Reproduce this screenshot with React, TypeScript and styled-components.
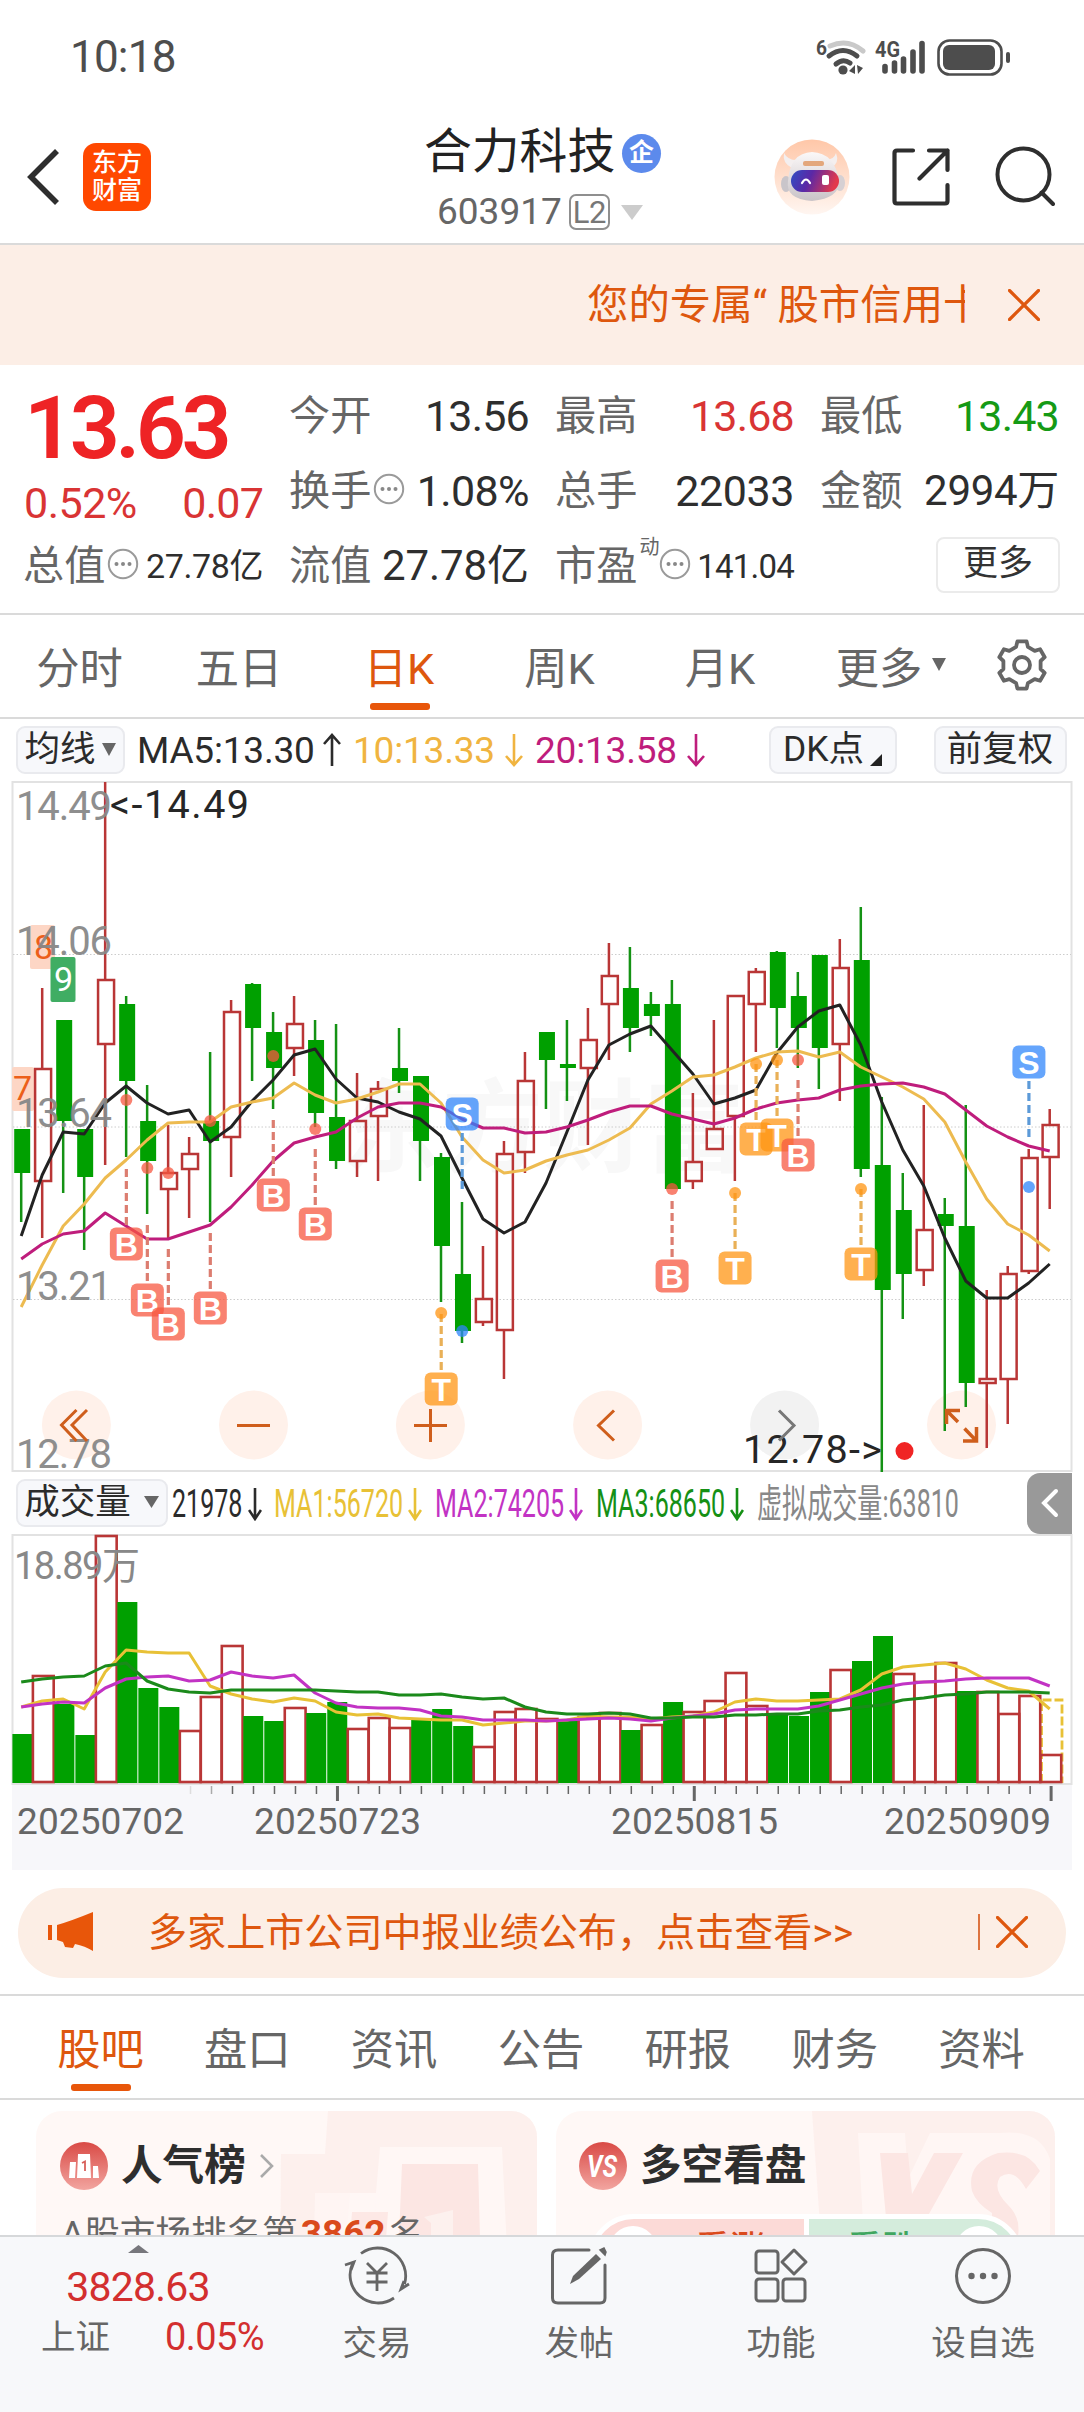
import React from "react";
import styled, { createGlobalStyle } from "styled-components";

const SANS = `Roboto, "Noto Sans CJK SC", sans-serif`;
const ORANGE = "#de570e";
const RED = "#b93636";
const GREEN = "#00a000";

const GlobalStyle = createGlobalStyle`
  html, body { margin: 0; padding: 0; background: #fff; }
  body { font-family: ${SANS}; color: #2b2b2b; }
  * { box-sizing: border-box; }
  svg { display: block; flex: none; }
`;

const Screen = styled.main`
  width: 1084px;
  height: 2412px;
  overflow: hidden;
  display: flex;
  flex-direction: column;
  background: #fff;
`;

const Txt = styled.span<{ $size: number; $color?: string; $ls?: number; $weight?: number }>`
  font-size: ${(p) => p.$size}px;
  color: ${(p) => p.$color || "#2e2e2e"};
  letter-spacing: ${(p) => p.$ls || 0}px;
  font-weight: ${(p) => p.$weight || 400};
  line-height: 1.2;
  white-space: nowrap;
`;

/* ---------- status bar and header ---------- */

const StatusBar = styled.div`
  flex: none;
  height: 110px;
  padding: 5px 73px 0 70px;
  display: flex;
  justify-content: space-between;
  align-items: center;
`;

const Header = styled.header`
  flex: none;
  height: 135px;
  display: grid;
  grid-template-columns: 424px 237px 1fr;
  border-bottom: 2px solid #dadada;
`;

const HeaderLeft = styled.div`
  display: flex;
  align-items: center;
  padding: 1px 0 0 26px;
  gap: 23px;
`;

const Logo = styled.div`
  width: 68px;
  height: 68px;
  border-radius: 13px;
  background: #ff4800;
  color: #fff;
  font: 500 25px/28px ${SANS};
  display: flex;
  flex-direction: column;
  align-items: center;
  justify-content: center;
`;

const HeaderTitle = styled.div`
  padding-top: 13px;
`;

const TitleRow = styled.div`
  height: 60px;
  display: flex;
  align-items: center;
  gap: 7px;
`;

const CorpBadge = styled.span`
  width: 39px;
  height: 39px;
  border-radius: 50%;
  background: #5c8aec;
  color: #fff;
  font-size: 25px;
  font-weight: 700;
  line-height: 38px;
  text-align: center;
`;

const CodeRow = styled.div`
  height: 58px;
  padding-left: 13px;
  display: flex;
  align-items: center;
`;

const LevelBox = styled.span`
  width: 41px;
  height: 36px;
  margin: 0 11px 0 7px;
  border: 2px solid #8f8f8f;
  border-radius: 7px;
  color: #777;
  font-size: 31px;
  letter-spacing: -0.5px;
  line-height: 33px;
  text-align: center;
`;

const HeaderRight = styled.div`
  display: flex;
  align-items: center;
  padding: 1px 0 0 113px;
`;

const Banner = styled.div`
  flex: none;
  height: 120px;
  padding: 0 44px 0 587px;
  background: #fceee6;
  display: flex;
  align-items: center;
  justify-content: space-between;
`;

const Marquee = styled.div`
  width: 378px;
  overflow: hidden;
  white-space: nowrap;
  font-size: 41.4px;
  line-height: 60px;
  color: ${ORANGE};
`;

/* ---------- quote ---------- */

const Quote = styled.section`
  flex: none;
  height: 250px;
  padding: 14px 25px 0 24px;
  display: grid;
  grid-template-columns: 239px 239px 238px 238px;
  grid-template-rows: 75px 75px 75px;
  column-gap: 27px;
  border-bottom: 2px solid #dadada;
`;

const PriceCell = styled.div`
  grid-row: span 2;
  display: grid;
  grid-template-rows: 98px 54px;
`;

const Price = styled.div`
  font-size: 88px;
  line-height: 97px;
  font-weight: 600;
  color: #ee2325;
  letter-spacing: -4.600px;
`;

const Between = styled.div`
  display: flex;
  align-items: center;
  justify-content: space-between;
`;

const LabelBox = styled.span`
  display: flex;
  align-items: center;
  gap: 2px;
`;

const Label = styled.span`
  margin-left: -1px;
  font-size: 41.2px;
  line-height: 1.2;
  color: #666;
  white-space: nowrap;
`;

const Sup = styled.sup`
  align-self: flex-start;
  font-size: 20px;
  line-height: 20px;
  color: #666;
  margin: -5px -2px 0 0;
`;

const MoreBtn = styled.button`
  width: 124px;
  height: 56px;
  margin: 0 -1px 4px auto;
  padding: 0 0 2px;
  border: 2px solid #ebebeb;
  border-radius: 8px;
  background: #fff;
  color: #333;
  font: 400 35px/48px ${SANS};
`;

/* ---------- tabs ---------- */

const PeriodTabs = styled.nav`
  flex: none;
  height: 104px;
  display: grid;
  grid-template-columns: 159px 160px 160px 161px 160px 182px 80px;
  border-bottom: 2px solid #dadada;
`;

const Tab = styled.div<{ $on?: boolean }>`
  position: relative;
  display: flex;
  align-items: center;
  justify-content: center;
  gap: 10px;
  padding-bottom: 3px;
  font-size: 43.3px;
  color: ${(p) => (p.$on ? ORANGE : "#666")};
  &::after {
    content: "";
    display: ${(p) => (p.$on ? "block" : "none")};
    position: absolute;
    left: calc(50% - 29px);
    bottom: 7px;
    width: 60px;
    height: 7px;
    border-radius: 3px;
    background: #e8560a;
  }
`;

/* ---------- indicator bars ---------- */

const IndicatorBar = styled.div`
  flex: none;
  height: 62px;
  padding: 0 17px 0 16px;
  display: flex;
  align-items: center;
`;

const Chip = styled.button<{ $w: number; $ml?: string; $gap?: number }>`
  width: ${(p) => p.$w}px;
  height: 48px;
  flex: none;
  margin-left: ${(p) => p.$ml || "0"};
  padding: 0 1px 2px 0;
  display: flex;
  align-items: center;
  justify-content: center;
  gap: ${(p) => p.$gap || 6}px;
  border: 2px solid #e9eaee;
  border-radius: 9px;
  background: #f7f8fb;
  color: #2b2b2b;
  font: 400 35.5px/44px ${SANS};
  white-space: nowrap;
`;

const Ma = styled.span<{ $w: number; $color: string }>`
  width: ${(p) => p.$w}px;
  flex: none;
  display: flex;
  align-items: center;
  justify-content: space-between;
  color: ${(p) => p.$color};
  font-size: 37px;
  letter-spacing: -0.2px;
  white-space: nowrap;
`;

const VolumeBar = styled.div`
  flex: none;
  height: 62px;
  padding-left: 16px;
  margin-right: 12px;
  display: flex;
  align-items: center;
`;

const VolMa = styled.span<{ $w: number; $color: string }>`
  width: ${(p) => p.$w}px;
  flex: none;
  display: flex;
  align-items: center;
  justify-content: space-between;
  padding-top: 2px;
  color: ${(p) => p.$color};
`;

const Narrow = styled.span<{ $w: number }>`
  width: ${(p) => p.$w}px;
  white-space: nowrap;
  font-size: 39px;
  line-height: 46px;
  > span {
    display: inline-block;
    transform: scaleX(0.643);
    transform-origin: left center;
  }
`;

const SideHandle = styled.button`
  margin-left: auto;
  width: 45px;
  height: 61px;
  padding: 0;
  border: 0;
  border-radius: 13px 0 0 13px;
  background: #999;
  display: flex;
  align-items: center;
  justify-content: center;
`;

/* ---------- notice and lower tabs ---------- */

const Notice = styled.div`
  flex: none;
  height: 90px;
  margin: 18px 18px 16px;
  padding: 0 38px 3px 29px;
  border-radius: 45px;
  background: #fceee5;
  display: flex;
  align-items: center;
`;

const NoticeText = styled.span`
  margin-left: 53px;
  flex: 1;
  padding-bottom: 5px;
  color: ${ORANGE};
  font-size: 39.1px;
  white-space: nowrap;
`;

const Divider = styled.i`
  width: 2px;
  height: 36px;
  margin-right: 16px;
  background: #dd7440;
`;

const InfoTabs = styled.nav`
  flex: none;
  height: 106px;
  padding: 0 29px 0 27px;
  display: grid;
  grid-template-columns: repeat(7, 1fr);
  border-top: 2px solid #dadada;
  border-bottom: 2px solid #dadada;
`;

const Cards = styled.section`
  flex: none;
  height: 135px;
  padding: 11px 29px 0 36px;
  display: grid;
  grid-template-columns: 501px 499px;
  gap: 19px;
  overflow: hidden;
`;

const Card = styled.article`
  position: relative;
  height: 200px;
  padding: 24px 24px 0;
  border-radius: 26px;
  background: #fff8f6;
  overflow: hidden;
`;

const CardArt = styled.svg`
  position: absolute;
  inset: 0;
`;

const CardHead = styled.div`
  position: relative;
  display: flex;
  align-items: center;
  height: 62px;
  gap: 13px;
`;

const CardTitle = styled.h3`
  margin: 0;
  font-size: 41.6px;
  line-height: 58px;
  font-weight: 700;
  color: #2e2e2e;
`;

const RankLine = styled.p`
  position: relative;
  margin: 9px 0 0 1px;
  font-size: 35.6px;
  line-height: 56px;
  color: #666;
  white-space: nowrap;
  b { color: #da4a1c; font-size: 37px; margin: 0 3px; }
`;

const VotePill = styled.div`
  position: relative;
  height: 92px;
  margin: 17px 0 0 8px;
  width: 436px;
  border: 5px solid #fff;
  border-radius: 46px;
  background: #fff;
  display: grid;
  grid-template-columns: 1fr 1fr;
  gap: 5px;
  overflow: hidden;
`;

const VoteSide = styled.div<{ $up?: boolean }>`
  display: flex;
  flex-direction: ${(p) => (p.$up ? "row" : "row-reverse")};
  align-items: flex-start;
  padding: 7px 16px;
  gap: 38px;
  background: ${(p) => (p.$up ? "#fcdad7" : "#d4ecdc")};
  color: ${(p) => (p.$up ? "#da4a1c" : "#3fa65f")};
  font-size: 35px;
  font-weight: 500;
  line-height: 48px;
  &::before {
    content: "";
    width: 48px;
    height: 48px;
    border-radius: 50%;
    background: #fff;
  }
`;

/* ---------- bottom navigation ---------- */

const BottomNav = styled.nav`
  flex: 1;
  background: #f7f8fa;
  border-top: 2px solid #d6d8da;
  display: grid;
  grid-template-columns: 276px 202px 202px 202px 202px;
`;

const IndexCell = styled.div`
  display: flex;
  flex-direction: column;
  align-items: center;
  padding-top: 8px;
`;

const IndexRow = styled.div`
  width: 223px;
  display: flex;
  align-items: center;
  justify-content: space-between;
  margin: 3px 0 0 29px;
`;

const NavCell = styled.div`
  display: flex;
  flex-direction: column;
  align-items: center;
  padding-top: 8px;
  gap: 14px;
  font-size: 34.5px;
  line-height: 44px;
  color: #666;
`;

/* ---------- small icons ---------- */

const Down = ({ w, h, c = "#666" }: { w: number; h: number; c?: string }) => (
  <svg width={w} height={h} viewBox="0 0 10 10" preserveAspectRatio="none">
    <path d="M0 0H10L5 10Z" fill={c} />
  </svg>
);

const Arrow = ({ w = 18, up }: { w?: number; up?: boolean }) => (
  <svg width={w} height="34" viewBox={`0 0 ${w} 34`} fill="none" stroke="currentColor" strokeWidth="2.6">
    <path d={up ? `M${w / 2} 33V2M1 11L${w / 2} 2L${w - 1} 11` : `M${w / 2} 1V32M1 23L${w / 2} 32L${w - 1} 23`} />
  </svg>
);

const Cross = () => (
  <svg width="32" height="32" viewBox="0 0 32 32" stroke={ORANGE} strokeWidth="3.200" strokeLinecap="round">
    <path d="M1.5 1.5L30.5 30.5M30.5 1.5L1.5 30.5" />
  </svg>
);

const DotsSvg = styled.svg`
  margin-bottom: 6px;
`;

const Dots = () => (
  <DotsSvg width="32" height="32" viewBox="0 0 32 32" fill="none">
    <circle cx="16" cy="16" r="14.2" stroke="#9a9a9a" strokeWidth="2" />
    <g fill="#888">
      <circle cx="9.5" cy="16" r="2" />
      <circle cx="16" cy="16" r="2" />
      <circle cx="22.5" cy="16" r="2" />
    </g>
  </DotsSvg>
);

const StatusIcons = () => (
  <svg width="196" height="44" viewBox="815 34 196 44" fill="none">
    <text x="816" y="53" fontSize="21" fontWeight="700" fill="#4d4d4d" textLength="11" lengthAdjust="spacingAndGlyphs">6</text>
    <g strokeLinecap="round" strokeWidth="5">
      <path d="M830 44Q848 36 863 49" stroke="#c9c9c9" />
      <path d="M829 54Q843 43 857 54" stroke="#4d4d4d" />
      <path d="M836 62Q843 56 850 61" stroke="#4d4d4d" />
    </g>
    <circle cx="843" cy="68" r="4.6" fill="#4d4d4d" />
    <path d="M855 63V72L849 69ZM857 63L863 66L858 72Z" fill="#4d4d4d" />
    <text x="875" y="55" fontSize="22" fontWeight="700" fill="#4d4d4d" textLength="25" lengthAdjust="spacingAndGlyphs">4G</text>
    <g stroke="#4d4d4d" strokeWidth="5.6" strokeLinecap="round">
      <path d="M885 64.500V69M894.500 61V69M903.500 57V69M913 50V69M922 41.500V69" />
    </g>
    <rect x="938.500" y="38.500" width="63" height="34" rx="11" stroke="#4d4d4d" strokeWidth="2.600" />
    <rect x="943" y="43" width="52" height="25" rx="6" fill="#4d4d4d" />
    <rect x="1006" y="50" width="4" height="11" rx="2" fill="#4d4d4d" />
  </svg>
);

const Robot = () => (
  <svg width="76" height="76" viewBox="0 0 76 76">
    <defs>
      <linearGradient id="halo" x1="0" y1="0" x2="0" y2="1">
        <stop offset="0" stopColor="#ffc7a8" />
        <stop offset="1" stopColor="#fff6f1" />
      </linearGradient>
      <linearGradient id="visor" x1="0" y1="0" x2="1" y2="0.200">
        <stop offset="0" stopColor="#2f4fc4" />
        <stop offset="0.450" stopColor="#5b28a6" />
        <stop offset="1" stopColor="#e2384c" />
      </linearGradient>
      <linearGradient id="shell" x1="0" y1="0" x2="0" y2="1">
        <stop offset="0" stopColor="#fbf8f8" />
        <stop offset="1" stopColor="#c9c3c7" />
      </linearGradient>
    </defs>
    <circle cx="38" cy="38" r="37.500" fill="url(#halo)" />
    <path d="M10 14Q8 24 18 29L25 21Q14 22 10 14ZM62 14Q66 24 57 29L51 21Q60 21 62 14Z" fill="#f4efef" />
    <ellipse cx="12" cy="45" rx="5" ry="8" fill="#c9c5ca" />
    <ellipse cx="66" cy="44" rx="5" ry="8" fill="#d6d0d3" />
    <path d="M14 42Q16 14 38 13Q61 14 65 42Q66 59 38 62Q11 60 14 42Z" fill="url(#shell)" />
    <rect x="29" y="22" width="21" height="5" rx="2" fill="#e3a77c" />
    <rect x="17" y="31" width="48" height="22" rx="11" fill="url(#visor)" />
    <path d="M28 44Q32 37 36 44" fill="none" stroke="#fff" strokeWidth="2.200" strokeLinecap="round" />
    <rect x="48" y="36" width="7" height="10" rx="2" fill="#fff" />
  </svg>
);

const gearPath = Array.from({ length: 6 })
  .map((_, k) => {
    const at = (deg: number, r: number) => {
      const a = ((deg + k * 60 - 90) * Math.PI) / 180;
      return `${(27 + r * Math.cos(a)).toFixed(1)} ${(27 + r * Math.sin(a)).toFixed(1)}`;
    };
    return `${at(-18, 19)} L${at(-11, 24)} L${at(11, 24)} L${at(18, 19)}`;
  })
  .join(" L");

const Gear = () => (
  <svg width="54" height="54" viewBox="0 0 54 54" fill="none" stroke="#666" strokeWidth="3.800" strokeLinejoin="round">
    <path d={`M${gearPath}Z`} />
    <circle cx="27" cy="27" r="8" />
  </svg>
);

/* ---------- chart data: [kind, high, top, bottom, low] ---------- */

type Candle = ["r" | "g", number, number, number, number];
const CANDLES: Candle[] = [
  ["g", 1129, 1129, 1173, 1222], ["r", 988, 1068, 1182, 1238], ["g", 1020, 1020, 1121, 1193],
  ["g", 1129, 1129, 1177, 1250], ["r", 782, 979, 1045, 1165], ["g", 996, 1004, 1081, 1157],
  ["g", 1085, 1121, 1161, 1214], ["r", 1125, 1172, 1190, 1238], ["r", 1137, 1153, 1170, 1218],
  ["g", 1052, 1121, 1141, 1222], ["r", 1000, 1011, 1138, 1177], ["g", 983, 984, 1028, 1081],
  ["g", 1012, 1032, 1068, 1109], ["r", 996, 1023, 1049, 1076], ["g", 1020, 1040, 1113, 1127],
  ["g", 1024, 1117, 1161, 1169], ["r", 1073, 1120, 1162, 1177], ["r", 1081, 1088, 1117, 1181],
  ["g", 1028, 1068, 1081, 1093], ["g", 1076, 1076, 1141, 1181], ["g", 1153, 1157, 1246, 1302],
  ["g", 1202, 1274, 1331, 1343], ["r", 1246, 1298, 1323, 1326], ["r", 1141, 1153, 1331, 1379],
  ["r", 1052, 1080, 1153, 1173], ["g", 1032, 1032, 1060, 1109], ["g", 1020, 1064, 1068, 1101],
  ["r", 1008, 1039, 1069, 1145], ["r", 943, 975, 1005, 1060], ["g", 947, 988, 1028, 1052],
  ["g", 992, 1004, 1016, 1036], ["g", 980, 1004, 1189, 1189], ["r", 1093, 1161, 1182, 1189],
  ["r", 1020, 1128, 1150, 1150], ["r", 995, 995, 1117, 1181], ["r", 968, 971, 1005, 1052],
  ["g", 951, 952, 1008, 1048], ["g", 972, 996, 1028, 1068], ["g", 955, 955, 1048, 1089],
  ["r", 939, 967, 1045, 1101], ["g", 907, 960, 1169, 1177], ["g", 1097, 1165, 1290, 1472],
  ["g", 1173, 1210, 1274, 1319], ["r", 1105, 1229, 1271, 1286], ["g", 1198, 1214, 1226, 1431],
  ["g", 1105, 1226, 1383, 1407], ["r", 1290, 1378, 1384, 1448], ["r", 1266, 1273, 1380, 1424],
  ["r", 1149, 1157, 1272, 1274], ["r", 1109, 1124, 1158, 1209],
];

const MA5 = [1236, 1175, 1132, 1134, 1103, 1086, 1103, 1114, 1110, 1142, 1127, 1101, 1080, 1055, 1049, 1079, 1098, 1102, 1112, 1119, 1136, 1178, 1219, 1233, 1222, 1183, 1132, 1080, 1045, 1034, 1026, 1050, 1074, 1104, 1098, 1090, 1053, 1027, 1011, 1005, 1045, 1102, 1150, 1186, 1238, 1281, 1298, 1298, 1283, 1264];
const MA10 = [1307, 1265, 1226, 1204, 1178, 1160, 1140, 1123, 1122, 1122, 1107, 1102, 1098, 1083, 1095, 1103, 1099, 1092, 1084, 1084, 1103, 1137, 1160, 1173, 1170, 1161, 1155, 1150, 1140, 1128, 1104, 1091, 1077, 1075, 1067, 1058, 1052, 1051, 1057, 1052, 1067, 1077, 1087, 1099, 1122, 1162, 1199, 1224, 1235, 1251];
const MA20 = [1259, 1244, 1234, 1231, 1213, 1226, 1239, 1239, 1232, 1225, 1207, 1185, 1161, 1143, 1137, 1132, 1118, 1107, 1103, 1103, 1107, 1119, 1128, 1128, 1133, 1132, 1127, 1120, 1112, 1106, 1106, 1114, 1119, 1124, 1118, 1109, 1103, 1100, 1098, 1090, 1086, 1084, 1083, 1087, 1094, 1110, 1126, 1137, 1146, 1151];

type Signal = { i: number; t: "B" | "T" | "S"; dot: number; from: number; y: number };
const SIGNALS: Signal[] = [
  { i: 5, t: "B", dot: 1100, from: 1169, y: 1244 },
  { i: 6, t: "B", dot: 1168, from: 1225, y: 1300 },
  { i: 7, t: "B", dot: 1173, from: 1249, y: 1324 },
  { i: 9, t: "B", dot: 1121, from: 1233, y: 1308 },
  { i: 12, t: "B", dot: 1056, from: 1120, y: 1195 },
  { i: 14, t: "B", dot: 1129, from: 1149, y: 1224 },
  { i: 20, t: "T", dot: 1313, from: 1314, y: 1389 },
  { i: 21, t: "S", dot: 1331, from: 1133, y: 1114 },
  { i: 31, t: "B", dot: 1189, from: 1201, y: 1276 },
  { i: 34, t: "T", dot: 1193, from: 1193, y: 1268 },
  { i: 35, t: "T", dot: 1064, from: 1064, y: 1139 },
  { i: 36, t: "T", dot: 1060, from: 1060, y: 1135 },
  { i: 37, t: "B", dot: 1060, from: 1080, y: 1155 },
  { i: 40, t: "T", dot: 1189, from: 1189, y: 1264 },
  { i: 48, t: "S", dot: 1187, from: 1081, y: 1062 },
];
const SIGNAL_COLOR = { B: "#f75740", T: "#ff9412", S: "#2f85fb" };
const DASH_COLOR = { B: "#dc7d70", T: "#e9b057", S: "#5c9ad8" };

const VOLUMES: ["r" | "g", number][] = [
  ["g", 1734], ["r", 1675], ["g", 1704], ["g", 1735], ["r", 1535], ["g", 1602], ["g", 1688], ["g", 1707], ["r", 1730], ["r", 1696],
  ["r", 1645], ["g", 1716], ["g", 1721], ["r", 1707], ["g", 1713], ["g", 1702], ["r", 1728], ["r", 1717], ["r", 1727], ["g", 1720],
  ["g", 1709], ["g", 1726], ["r", 1746], ["r", 1711], ["r", 1708], ["r", 1718], ["g", 1720], ["r", 1716], ["r", 1712], ["g", 1730],
  ["r", 1724], ["g", 1702], ["r", 1711], ["r", 1700], ["r", 1672], ["r", 1705], ["g", 1715], ["g", 1716], ["g", 1692], ["r", 1669],
  ["g", 1661], ["g", 1636], ["r", 1673], ["r", 1681], ["r", 1662], ["g", 1691], ["r", 1691], ["r", 1713], ["r", 1695], ["r", 1754],
];
const V1 = [1707, 1701, 1699, 1709, 1672, 1650, 1652, 1653, 1653, 1686, 1694, 1699, 1702, 1698, 1701, 1712, 1715, 1714, 1718, 1719, 1720, 1720, 1725, 1723, 1721, 1721, 1720, 1716, 1717, 1717, 1719, 1717, 1716, 1712, 1702, 1699, 1701, 1701, 1700, 1699, 1690, 1674, 1667, 1665, 1663, 1669, 1680, 1688, 1691, 1709];
const V2 = [1707, 1704, 1702, 1703, 1688, 1679, 1677, 1676, 1681, 1680, 1672, 1676, 1678, 1675, 1693, 1703, 1707, 1708, 1708, 1710, 1716, 1717, 1720, 1720, 1720, 1721, 1720, 1719, 1718, 1719, 1721, 1718, 1716, 1714, 1710, 1709, 1709, 1709, 1706, 1700, 1694, 1688, 1684, 1682, 1681, 1679, 1678, 1678, 1678, 1686];
const V3 = [1682, 1679, 1677, 1676, 1666, 1663, 1681, 1689, 1692, 1693, 1690, 1690, 1690, 1690, 1690, 1691, 1692, 1692, 1695, 1695, 1694, 1697, 1699, 1698, 1707, 1712, 1714, 1714, 1713, 1714, 1718, 1718, 1717, 1717, 1715, 1715, 1714, 1714, 1711, 1710, 1707, 1705, 1700, 1698, 1695, 1694, 1692, 1692, 1692, 1693];

const STEP = 20.99;
const cx = (i: number) => 21.2 + STEP * i;
const line = (ys: number[]) => ys.map((y, i) => `${cx(i).toFixed(1)},${y}`).join(" ");

const ChartText = ({ x, y, w, size, fill = "#888", children }: { x: number; y: number; w: number; size: number; fill?: string; children: string }) => (
  <text x={x} y={y} textLength={w} fontSize={size} fill={fill} fontFamily={SANS}>{children}</text>
);

const ROUND = [76.4, 253.5, 430.4, 607.6, 784.6, 961.5];

const CandleChart = () => (
  <svg width="1084" height="691" viewBox="0 781 1084 691" fill="none">
    <text x="341" y="1164" fontSize="101" fontWeight="700" fill="#f8f8f8" fontFamily={SANS}>东方财富</text>
    <rect x="12.500" y="782" width="1059" height="689" stroke="#e2e2e2" strokeWidth="2" />
    {[954.5, 1127, 1299.5].map((y) => (
      <path key={y} d={`M13 ${y}H1071`} stroke="#ccc" strokeDasharray="1.500 2" />
    ))}
    {ROUND.map((x, k) => (
      <circle key={x} cx={x} cy="1425" r="34.500" fill={k === 4 ? "#f2f2f2" : "#fff1ea"} />
    ))}
    <rect x="30" y="925" width="25" height="44" rx="2" fill="#fdd6c5" />
    <rect x="12" y="1067" width="22" height="44" rx="2" fill="#fdd6c5" />
    <rect x="50.500" y="957" width="25" height="45" rx="2" fill="#40ad63" />
    {CANDLES.map(([k, h, t, b, l], i) => {
      const x = cx(i);
      return k === "g" ? (
        <g key={i}>
          <path d={`M${x} ${h}V${l}`} stroke="#149214" strokeWidth="2.500" />
          <rect x={x - 7} y={t} width="16" height={b - t} fill={GREEN} />
        </g>
      ) : (
        <g key={i} stroke={RED} strokeWidth="2.500">
          <path d={`M${x} ${h}V${t}M${x} ${b}V${l}`} />
          <rect x={x - 7.1} y={t + 1} width="16" height={Math.max(b - t - 2, 3)} />
        </g>
      );
    })}
    <g strokeWidth="3" strokeLinejoin="round">
      <polyline points={line(MA5)} stroke="#222" />
      <polyline points={line(MA10)} stroke="#edbb50" />
      <polyline points={line(MA20)} stroke="#bf1d7c" />
    </g>
    {SIGNALS.map((s) => {
      const x = cx(s.i) + 0.2;
      const end = s.t === "S" ? s.from + 56 : s.y - 18;
      return (
        <g key={s.i}>
          <path d={`M${x} ${s.from}V${end}`} stroke={DASH_COLOR[s.t]} strokeWidth="3.200" strokeDasharray="8 4" />
          <circle cx={x} cy={s.dot} r="6" fill={SIGNAL_COLOR[s.t]} opacity="0.750" />
          <rect x={x - 16.5} y={s.y - 16.5} width="33" height="33" rx="6" fill={SIGNAL_COLOR[s.t]} opacity="0.740" />
          <text x={x} y={s.y + 11.500} textAnchor="middle" fontSize="32" fontWeight="700" fill="#fff" fontFamily={`"Liberation Sans", sans-serif`}>{s.t}</text>
        </g>
      );
    })}
    <ChartText x={34} y={959} w={17} size={34} fill="#ec5f1a">8</ChartText>
    <ChartText x={54} y={991} w={18} size={34} fill="#fff">9</ChartText>
    <ChartText x={13} y={1100} w={17} size={34} fill="#ec5f1a">7</ChartText>
    <g opacity="0.950">
      <ChartText x={16} y={820} w={96} size={40}>14.49</ChartText>
      <ChartText x={16} y={955} w={96} size={40}>14.06</ChartText>
      <ChartText x={16} y={1127} w={96} size={40}>13.64</ChartText>
      <ChartText x={16} y={1300} w={96} size={40}>13.21</ChartText>
      <ChartText x={16} y={1468} w={96} size={40}>12.78</ChartText>
    </g>
    <ChartText x={110} y={818} w={139} size={39.5} fill="#262626">{"<-14.49"}</ChartText>
    <ChartText x={743} y={1463} w={139} size={39.5} fill="#262626">{"12.78->"}</ChartText>
    <circle cx="904.500" cy="1451" r="9" fill="#f02424" />
    <g stroke="#cf5e1c" strokeWidth="3">
      <path d="M76.500 1410L61.500 1425L76.500 1441M87 1410L72 1425L87 1441" />
      <path d="M237 1425.500H270" />
      <path d="M414 1425.500H447M430.500 1409V1442" />
      <path d="M614 1410.500L598.500 1425.500L614 1440.500" />
      <path d="M779 1410.500L794 1425.500L779 1440.500" stroke="#777" />
      <path d="M946.500 1424V1410.500H960M946.500 1410.500L958 1422M976.500 1427V1441H963M976.500 1441L964.500 1428.500" strokeWidth="3.500" />
    </g>
  </svg>
);

const DATES: [string, number][] = [["20250702", 17], ["20250723", 254], ["20250815", 611], ["20250909", 884]];

const VolumeChart = () => (
  <svg width="1084" height="336" viewBox="0 1534 1084 336" fill="none">
    <rect x="12" y="1785" width="1060" height="85" fill="#f7f7fa" />
    <rect x="12.500" y="1535" width="1059" height="249" stroke="#e2e2e2" strokeWidth="2" />
    <path d="M1041.500 1783V1700H1062V1783" stroke="#e8c136" strokeWidth="2.800" strokeDasharray="9 3" />
    {VOLUMES.map(([k, t], i) =>
      k === "g" ? (
        <rect key={i} x={12.4 + STEP * i} y={t} width="20" height={1783 - t} fill={GREEN} />
      ) : (
        <rect key={i} x={11.9 + STEP * i} y={t + 1} width="20.800" height={1781 - t} stroke={RED} strokeWidth="2.600" />
      )
    )}
    <g strokeWidth="3" strokeLinejoin="round">
      <polyline points={line(V1)} stroke="#e8c136" />
      <polyline points={line(V2)} stroke="#c233c4" />
      <polyline points={line(V3)} stroke="#1b8a1b" />
    </g>
    <ChartText x={14} y={1579} w={126} size={38}>18.89万</ChartText>
    {Array.from({ length: 42 }).map((_, k) => {
      const i = k + 8;
      const big = i === 15 || i === 32 || i === 49;
      return <path key={i} d={`M${22.6 + STEP * i} 1786V${big ? 1801 : 1794}`} stroke={i === 8 ? "#ddd" : i === 9 ? "#aaa" : "#666"} strokeWidth={big ? 3 : 1.5} />;
    })}
    {DATES.map(([d, x]) => (
      <ChartText key={d} x={x} y={1834} w={167} size={37} fill="#666">{d}</ChartText>
    ))}
  </svg>
);

const INFO_TABS = ["股吧", "盘口", "资讯", "公告", "研报", "财务", "资料"];

export default function App() {
  return (
    <>
      <GlobalStyle />
      <Screen>
        <StatusBar>
          <Txt $size={44} $color="#4d4d4d" $ls={-0.8}>10:18</Txt>
          <StatusIcons />
        </StatusBar>

        <Header>
          <HeaderLeft>
            <svg width="34" height="58" viewBox="0 0 34 58" fill="none" stroke="#2e2e2e" strokeWidth="5.600">
              <path d="M31 3L5 29L31 55" />
            </svg>
            <Logo><span>东方</span><span>财富</span></Logo>
          </HeaderLeft>
          <HeaderTitle>
            <TitleRow>
              <Txt $size={47.8} $color="#222">合力科技</Txt>
              <CorpBadge>企</CorpBadge>
            </TitleRow>
            <CodeRow>
              <Txt $size={37} $color="#666">603917</Txt>
              <LevelBox>L2</LevelBox>
              <Down w={22} h={15} c="#ccc" />
            </CodeRow>
          </HeaderTitle>
          <HeaderRight>
            <Robot />
            <svg width="58" height="58" viewBox="0 0 58 58" fill="none" stroke="#2e2e2e" strokeWidth="4.200" strokeLinecap="round" strokeLinejoin="round" style={{ marginLeft: 42 }}>
              <path d="M21 2.500H5Q2.500 2.500 2.500 5V53Q2.500 55.500 5 55.500H53Q55.500 55.500 55.500 53V37M37 2.500H55.500V22M55.500 2.500L27.500 30.500" />
            </svg>
            <svg width="60" height="62" viewBox="0 0 60 62" fill="none" stroke="#2e2e2e" strokeWidth="4" strokeLinecap="round" style={{ marginLeft: 45 }}>
              <circle cx="28.500" cy="28.500" r="26" />
              <path d="M46.500 46.500L58 58" />
            </svg>
          </HeaderRight>
        </Header>

        <Banner>
          <Marquee>您的专属“ 股市信用卡</Marquee>
          <Cross />
        </Banner>

        <Quote>
          <PriceCell>
            <Price>13.63</Price>
            <Between>
              <Txt $size={43} $color="#d93434" $ls={-0.5}>0.52%</Txt>
              <Txt $size={43} $color="#d93434" $ls={-0.8}>0.07</Txt>
            </Between>
          </PriceCell>
          <Between>
            <Label>今开</Label>
            <Txt $size={43} $ls={-0.8}>13.56</Txt>
          </Between>
          <Between>
            <Label>最高</Label>
            <Txt $size={43} $ls={-0.8} $color="#d93434">13.68</Txt>
          </Between>
          <Between>
            <Label>最低</Label>
            <Txt $size={43} $ls={-0.8} $color="#159a15">13.43</Txt>
          </Between>
          <Between>
            <LabelBox><Label>换手</Label><Dots /></LabelBox>
            <Txt $size={43} $ls={-0.6}>1.08%</Txt>
          </Between>
          <Between>
            <Label>总手</Label>
            <Txt $size={43} $ls={-0.4}>22033</Txt>
          </Between>
          <Between>
            <Label>金额</Label>
            <Txt $size={42} $ls={-0.3}>2994万</Txt>
          </Between>
          <Between>
            <LabelBox><Label>总值</Label><Dots /></LabelBox>
            <Txt $size={34} $ls={-0.4}>27.78亿</Txt>
          </Between>
          <Between>
            <Label>流值</Label>
            <Txt $size={42} $ls={-0.1}>27.78亿</Txt>
          </Between>
          <Between>
            <LabelBox><Label>市盈</Label><Sup>动</Sup><Dots /></LabelBox>
            <Txt $size={33} $ls={-0.8}>141.04</Txt>
          </Between>
          <Between><MoreBtn>更多</MoreBtn></Between>
        </Quote>

        <PeriodTabs>
          <Tab>分时</Tab>
          <Tab>五日</Tab>
          <Tab $on>日K</Tab>
          <Tab>周K</Tab>
          <Tab>月K</Tab>
          <Tab>更多<Down w={14} h={13} /></Tab>
          <Tab><Gear /></Tab>
        </PeriodTabs>

        <IndicatorBar>
          <Chip $w={109}>均线<Down w={14} h={13} /></Chip>
          <Ma $w={204} $color="#2b2b2b" style={{ marginLeft: 12 }}>MA5:13.30<Arrow up /></Ma>
          <Ma $w={170} $color="#f0b440" style={{ marginLeft: 12 }}>10:13.33<Arrow /></Ma>
          <Ma $w={170} $color="#bf1d7c" style={{ marginLeft: 12 }}>20:13.58<Arrow /></Ma>
          <Chip $w={128} $ml="auto">
            DK点
            <svg width="12" height="12" viewBox="0 0 12 12" style={{ alignSelf: "flex-end", marginBottom: 4 }}><path d="M12 0V12H0Z" fill="#222" /></svg>
          </Chip>
          <Chip $w={133} $ml="37px">前复权</Chip>
        </IndicatorBar>

        <CandleChart />

        <VolumeBar>
          <Chip $w={152} $gap={13}>成交量<Down w={15} h={12} /></Chip>
          <VolMa $w={90} $color="#2b2b2b" style={{ marginLeft: 4 }}><Narrow $w={70}><span>21978</span></Narrow><Arrow w={14} /></VolMa>
          <VolMa $w={148} $color="#e8c136" style={{ marginLeft: 12 }}><Narrow $w={128}><span>MA1:56720</span></Narrow><Arrow w={14} /></VolMa>
          <VolMa $w={148} $color="#c233c4" style={{ marginLeft: 13 }}><Narrow $w={128}><span>MA2:74205</span></Narrow><Arrow w={14} /></VolMa>
          <VolMa $w={148} $color="#159015" style={{ marginLeft: 13 }}><Narrow $w={128}><span>MA3:68650</span></Narrow><Arrow w={14} /></VolMa>
          <VolMa $w={200} $color="#888" style={{ marginLeft: 13 }}><Narrow $w={200}><span>虚拟成交量:63810</span></Narrow></VolMa>
          <SideHandle>
            <svg width="18" height="30" viewBox="0 0 18 30" fill="none" stroke="#fff" strokeWidth="4" strokeLinecap="round">
              <path d="M15 3L3 15L15 27" />
            </svg>
          </SideHandle>
        </VolumeBar>

        <VolumeChart />

        <Notice>
          <svg width="48" height="40" viewBox="0 0 48 40" fill="#e8560a">
            <path d="M1 13H5V28H1ZM10 13Q24 9 46 0V39Q38 34 28 32L26 36L18 35L16 30L10 28Z" />
          </svg>
          <NoticeText>多家上市公司中报业绩公布，点击查看&gt;&gt;</NoticeText>
          <Divider />
          <Cross />
        </Notice>

        <InfoTabs>
          {INFO_TABS.map((t, i) => (
            <Tab key={t} $on={i === 0}>{t}</Tab>
          ))}
        </InfoTabs>

        <Cards>
          <Card>
            <CardArt width="501" height="200" viewBox="36 2112 501 200">
              <path d="M328 2112H537V2312H280L281 2155H325Z" fill="#fdeeeb" opacity="0.800" />
              <path d="M380 2148H502L510 2312H340L350 2194H376Z" fill="#fff7f5" />
              <path d="M315 2194H376L370 2312H312Z" fill="#fff7f5" opacity="0.700" />
              <path d="M402 2165H478L482 2312H396Z" fill="#fce6e3" />
              <path d="M352 2213H388L386 2240H350Z" fill="#fde8e5" />
              <path d="M424 2218L453 2211V2240H431V2224Z" fill="#fdf1ee" />
            </CardArt>
            <CardHead>
              <svg width="48" height="48" viewBox="0 0 48 48">
                <defs>
                  <linearGradient id="coin" x1="0" y1="0" x2="0" y2="1">
                    <stop offset="0" stopColor="#d94a45" />
                    <stop offset="1" stopColor="#f2a5a0" />
                  </linearGradient>
                </defs>
                <circle cx="24" cy="24" r="24" fill="url(#coin)" />
                <path d="M10 20H16L15 36H9ZM18 12H30L31 36H17ZM33 24H38L39 36H33Z" fill="#fff" />
                <path d="M22 21L25 19.500V29" stroke="#d8605a" strokeWidth="1.800" fill="none" />
              </svg>
              <CardTitle>人气榜</CardTitle>
              <svg width="16" height="24" viewBox="0 0 16 24" fill="none" stroke="#aaa" strokeWidth="2.600">
                <path d="M2 1L13 12L2 23" />
              </svg>
            </CardHead>
            <RankLine>A股市场排名第<b>3862</b>名</RankLine>
          </Card>
          <Card>
            <CardArt width="499" height="200" viewBox="556 2112 499 200">
              <path d="M812 2112H1055V2312H826Z" fill="#fdeeeb" opacity="0.800" />
              <path d="M858 2134H905L908 2180L930 2134H1000Q1040 2130 1050 2160V2312H868Z" fill="#fff6f4" />
              <path d="M880 2154H908L912 2195L934 2154H963L915 2240H888Z" fill="#fce6e3" />
              <path d="M1040 2172Q1028 2150 998 2154Q966 2164 972 2192Q976 2204 992 2214V2232H960L955 2260H1010Q1028 2225 1008 2206Q992 2190 1000 2178Q1014 2168 1026 2190Z" fill="#fce6e3" />
            </CardArt>
            <CardHead style={{ marginLeft: -1 }}>
              <svg width="48" height="48" viewBox="0 0 48 48">
                <circle cx="24" cy="24" r="24" fill="url(#coin)" />
                <text x="8" y="35" fontSize="31" fontWeight="700" fontStyle="italic" fill="#fff" textLength="30" lengthAdjust="spacingAndGlyphs" fontFamily={SANS}>VS</text>
              </svg>
              <CardTitle>多空看盘</CardTitle>
            </CardHead>
            <VotePill>
              <VoteSide $up>看涨</VoteSide>
              <VoteSide>看跌</VoteSide>
            </VotePill>
          </Card>
        </Cards>

        <BottomNav>
          <IndexCell>
            <svg width="21" height="8" viewBox="0 0 21 8"><path d="M0 8L10.500 0L21 8Z" fill="#77777c" /></svg>
            <Txt $size={41} $color="#d32f2f" $ls={-0.8} style={{ marginTop: 10 }}>3828.63</Txt>
            <IndexRow>
              <Txt $size={34.5} $color="#666">上证</Txt>
              <Txt $size={38} $color="#d32f2f" $ls={-0.6}>0.05%</Txt>
            </IndexRow>
          </IndexCell>
          <NavCell>
            <svg width="66" height="62" viewBox="0 0 66 62" fill="none" stroke="#666" strokeWidth="2.800">
              <path d="M17 8.500A28 28 0 0 1 60.500 39M50 53A28 28 0 0 1 9 17.500M1 20L10 17L7 25M65 39L57 44L60 36" />
              <path d="M23 18L33 28L43 18M22.500 28H43.500M22.500 37H43.500M33 28V46" />
            </svg>
            交易
          </NavCell>
          <NavCell>
            <svg width="62" height="62" viewBox="0 0 62 62" fill="none" stroke="#666" strokeWidth="3" strokeLinecap="round">
              <path d="M41 5H10Q4.500 5 4.500 10V53Q4.500 58 10 58H52Q57 58 57 53V20" />
              <path d="M22 39L25 31L48 9L53 14L31 34Z" fill="#666" stroke="none" />
              <path d="M52 5L56 3L58 7L57 10Z" fill="#666" strokeWidth="1.500" />
            </svg>
            发帖
          </NavCell>
          <NavCell>
            <svg width="62" height="62" viewBox="0 0 62 62" fill="none" stroke="#666" strokeWidth="3">
              <rect x="6" y="6" width="22" height="22" rx="3" />
              <rect x="6" y="34" width="22" height="22" rx="3" />
              <rect x="33" y="34" width="22" height="22" rx="3" />
              <path d="M44 5L56 17L44 29L32 17Z" strokeLinejoin="round" />
            </svg>
            功能
          </NavCell>
          <NavCell>
            <svg width="62" height="62" viewBox="0 0 62 62" fill="none">
              <circle cx="31" cy="31" r="26.500" stroke="#666" strokeWidth="3" />
              <g fill="#666"><circle cx="19.500" cy="31" r="3.200" /><circle cx="31" cy="31" r="3.200" /><circle cx="42.500" cy="31" r="3.200" /></g>
            </svg>
            设自选
          </NavCell>
        </BottomNav>
      </Screen>
    </>
  );
}
